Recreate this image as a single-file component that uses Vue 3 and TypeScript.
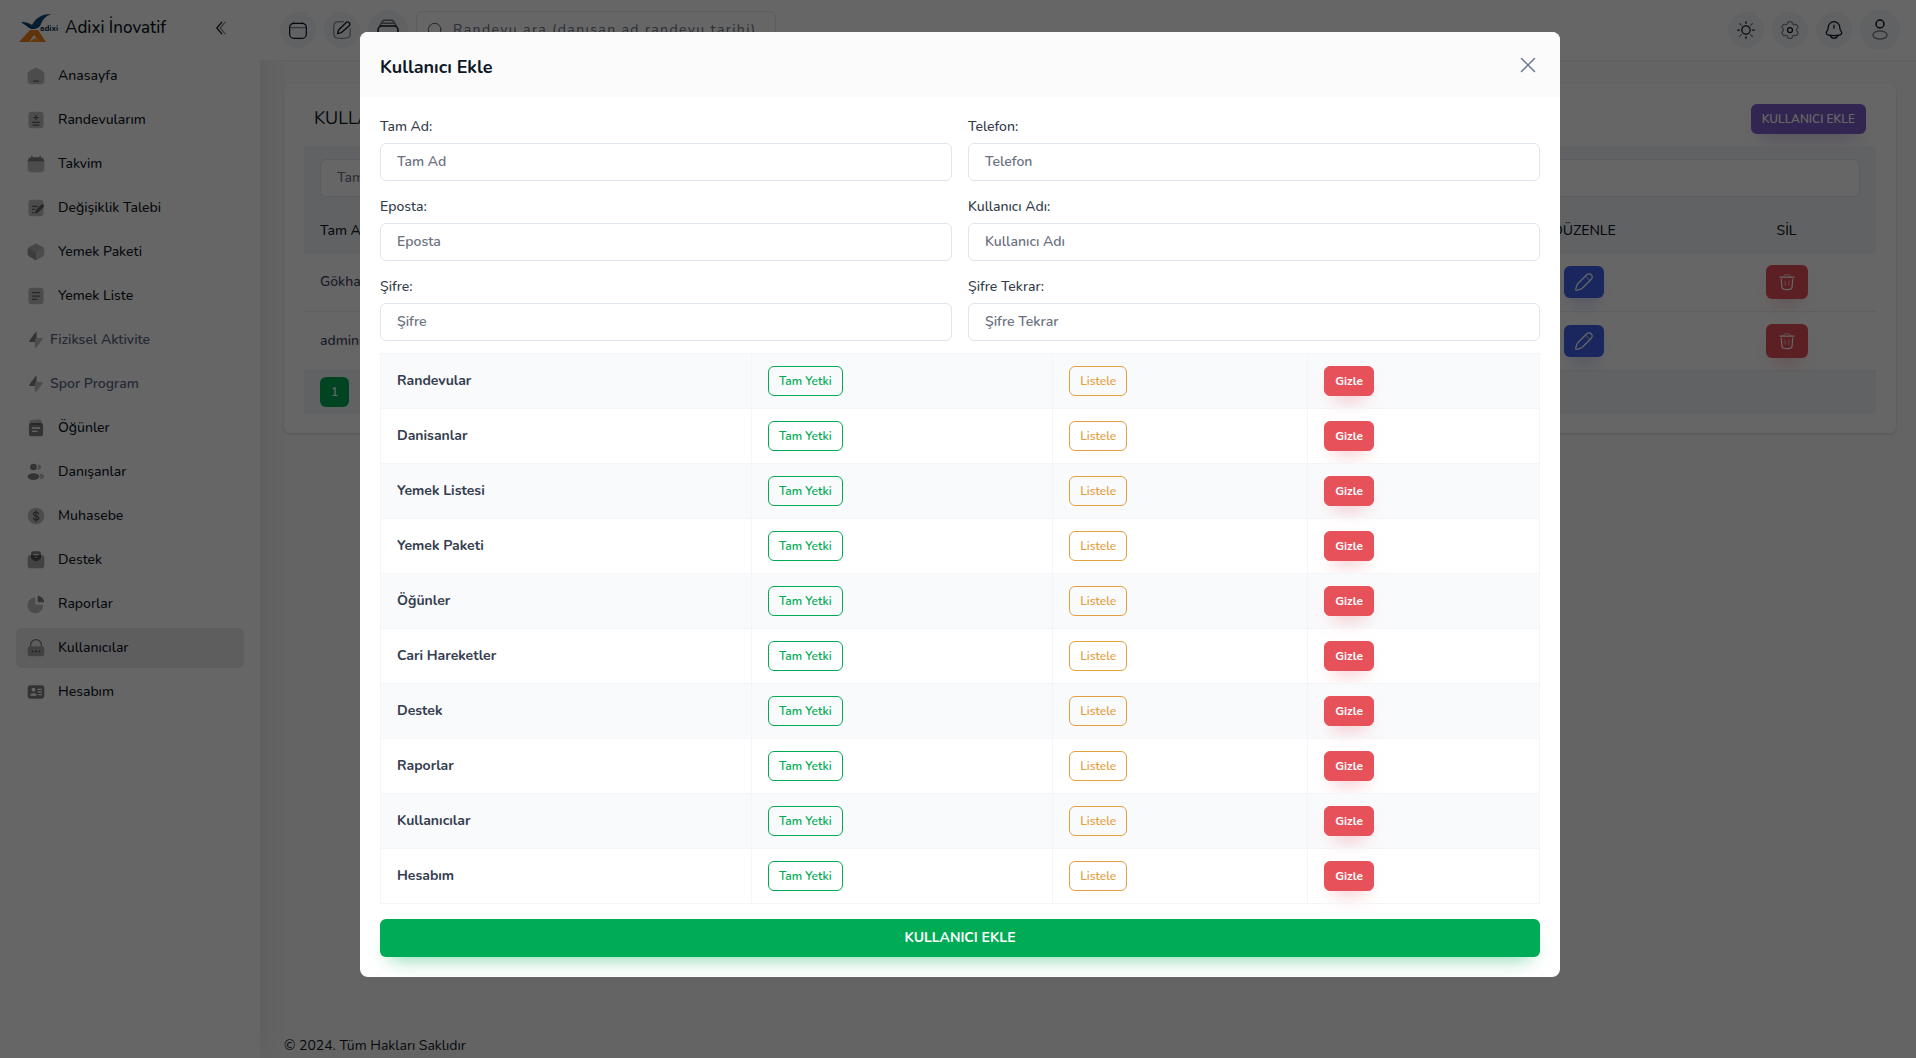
<script setup lang="ts">
import { ref } from 'vue'

interface MenuItem {
  label: string
  icon: string
  muted?: boolean
  active?: boolean
}

interface Field {
  id: string
  label: string
  type: string
}

const menu: MenuItem[] = [
  { label: 'Anasayfa', icon: 'home' },
  { label: 'Randevularım', icon: 'invoice' },
  { label: 'Takvim', icon: 'calendar' },
  { label: 'Değişiklik Talebi', icon: 'edit' },
  { label: 'Yemek Paketi', icon: 'box' },
  { label: 'Yemek Liste', icon: 'list' },
  { label: 'Fiziksel Aktivite', icon: 'bolt', muted: true },
  { label: 'Spor Program', icon: 'bolt', muted: true },
  { label: 'Öğünler', icon: 'notes' },
  { label: 'Danışanlar', icon: 'users' },
  { label: 'Muhasebe', icon: 'dollar' },
  { label: 'Destek', icon: 'mailbox' },
  { label: 'Raporlar', icon: 'chart' },
  { label: 'Kullanıcılar', icon: 'lock', active: true },
  { label: 'Hesabım', icon: 'card' },
]

const fields: Field[] = [
  { id: 'fullname', label: 'Tam Ad', type: 'text' },
  { id: 'phone', label: 'Telefon', type: 'tel' },
  { id: 'email', label: 'Eposta', type: 'email' },
  { id: 'username', label: 'Kullanıcı Adı', type: 'text' },
  { id: 'password', label: 'Şifre', type: 'password' },
  { id: 'password2', label: 'Şifre Tekrar', type: 'password' },
]

const permissions: string[] = [
  'Randevular', 'Danisanlar', 'Yemek Listesi', 'Yemek Paketi', 'Öğünler',
  'Cari Hareketler', 'Destek', 'Raporlar', 'Kullanıcılar', 'Hesabım',
]

const users: string[] = ['Gökhan', 'adminsu']

const form = ref<Record<string, string>>({})
</script>

<template>
  <div class="app">
    <aside class="sidebar">
      <div class="brand">
        <svg class="logo" viewBox="0 0 40 28" aria-hidden="true">
          <path d="M2 8c6 0 8 1 11 3C17 4 22 0 32 0c-7 3-8 6-10 10-1 3-4 5-8 5C10 14 6 11 2 8z" fill="#0f4c75" />
          <path d="M4 7c5 5 8 6 13 6-3 3-6 2-8 0z" fill="#0b3a5b" />
          <path d="M0 28 11 16h8l8 12h-7l-5-7-5 7z" fill="#f08019" />
          <path d="m10 28 6-4 5 4z" fill="#f7941d" />
          <text x="21" y="17" font-size="8" font-weight="800" fill="#143a52">adixi</text>
        </svg>
        <span class="brand-name">Adixi İnovatif</span>
        <button class="collapse" type="button" aria-label="Menüyü daralt">
          <svg viewBox="0 0 24 24" width="20" height="20" fill="none" stroke="currentColor" stroke-width="1.5" stroke-linecap="round" stroke-linejoin="round">
            <path d="m13 19-6-7 6-7" />
            <path d="m17 19-6-7 6-7" opacity=".5" />
          </svg>
        </button>
      </div>
      <nav class="menu">
        <a v-for="item in menu" :key="item.label" href="#" :class="['menu-item', { muted: item.muted, active: item.active }]">
          <svg class="menu-icon" viewBox="0 0 24 24" fill="currentColor" aria-hidden="true">
            <template v-if="item.icon === 'home'">
              <path opacity=".5" d="M2 12.2c0-2.3 0-3.4.5-4.4s1.500-1.500 3.400-2.700l2-1.200C9.900 2.600 10.900 2 12 2s2.100.6 4.100 1.900l2 1.200c1.900 1.200 2.900 1.700 3.400 2.700s.5 2.100.5 4.400v1.500c0 3.900 0 5.900-1.200 7.100S17.800 22 14 22h-4c-3.800 0-5.700 0-6.800-1.200S2 17.600 2 13.700z" />
              <rect x="8.250" y="17.250" width="7.500" height="1.500" rx=".75" />
            </template>
            <template v-else-if="item.icon === 'invoice'">
              <rect opacity=".5" x="3" y="2" width="18" height="20" rx="4" />
              <path d="M11.250 6h1.500v2.250H15v1.500h-2.250V12h-1.500V9.750H9v-1.500h2.250z" />
              <rect x="7" y="14" width="10" height="1.500" rx=".75" />
              <rect x="8" y="17.500" width="8" height="1.500" rx=".75" />
            </template>
            <template v-else-if="item.icon === 'calendar'">
              <path d="M7.750 2.500a.75.75 0 0 0-1.500 0v1.600C3.900 4.400 2.200 5.700 2 9h20c-.2-3.300-1.900-4.600-4.250-4.900V2.500a.75.75 0 0 0-1.500 0V4h-8.500z" />
              <path opacity=".5" d="M2 9h20v5c0 3.800 0 5.700-1.200 6.800S17.800 22 14 22h-4c-3.800 0-5.700 0-6.800-1.200S2 17.800 2 14z" />
            </template>
            <template v-else-if="item.icon === 'edit'">
              <rect opacity=".5" x="3" y="2" width="18" height="20" rx="4" />
              <path d="m18.200 8.200-6.600 6.500-1.300 4.100 4.200-1.300L21 11c2-2-.8-4.700-2.800-2.800z" />
              <path d="M7.250 9.250h7v1.500h-7zM7.250 13h3v1.500h-3zM7.250 16.750h2v1.500h-2z" />
            </template>
            <template v-else-if="item.icon === 'box'">
              <path opacity=".8" d="M12 22V12L2.700 7.200C2 8.200 2 9.500 2 11.500v1c0 3.500.6 4.500 4 6.200l2 1.100C10 20.900 11 22 12 22z" />
              <path opacity=".6" d="m2.700 7.200 9.300 4.800 9.300-4.800c-.7-.9-1.800-1.500-3.300-2.300l-2-1C14 2.800 13 2 12 2s-2 .8-4 1.900l-2 1C4.500 5.700 3.400 6.300 2.700 7.200z" />
              <path opacity=".5" d="m21.300 7.200-9.300 4.800v10c1 0 2-1.100 4-2.200l2-1.100c3.400-1.700 4-2.700 4-6.200v-1c0-2 0-3.300-.7-4.300z" />
            </template>
            <template v-else-if="item.icon === 'list'">
              <rect opacity=".5" x="3" y="2" width="18" height="20" rx="4" />
              <path d="M7.250 7.250h9.500v1.500h-9.500zM7.250 11.250h9.500v1.500h-9.500zM7.250 15.250h6v1.500h-6z" />
            </template>
            <template v-else-if="item.icon === 'bolt'">
              <path d="M10.700 3.700 4.400 12.300c-.9 1.300-.4 2.200 1.100 2.200h5.200V12c0-1.500.6-2.300 2-2.300V3c0-1.200-1.200-.6-2 .7z" />
              <path opacity=".5" d="M10.700 14.500V21c0 1.200 1.600.6 2.400-.5l6.500-8.800c.9-1.200.3-2-1.100-2h-5.800c-1.400 0-2 .8-2 2.300z" />
            </template>
            <template v-else-if="item.icon === 'notes'">
              <path opacity=".5" d="M4 4c1-1.500 8-2.500 13-2 1.500.2 2 1.500 2 3l1 3H4z" />
              <path fill-rule="evenodd" d="M7 6h10c2.500 0 3.500 1.300 3.500 3.500v9c0 2.200-1 3.500-3.500 3.500H7c-2.500 0-3.500-1.300-3.500-3.500v-9C3.500 7.300 4.500 6 7 6zm.2 5.200v1.600h9.600v-1.600zm0 4v1.600h6.600v-1.600z" />
            </template>
            <template v-else-if="item.icon === 'users'">
              <circle cx="9" cy="6" r="4" />
              <ellipse cx="9" cy="17.500" rx="7" ry="4" />
              <path opacity=".5" d="M14.500 3a3.200 3.200 0 1 1-1 6c.9-1.800.9-4.500 1-6zM15.500 14c3.500 0 6.500 1.400 6.500 3.300s-2.700 3.200-6 3.200c1.800-2 1.800-4.500-.5-6.500z" />
            </template>
            <template v-else-if="item.icon === 'dollar'">
              <circle opacity=".5" cx="12" cy="12" r="10" />
              <path d="M15 9.200c-.4-1.200-1.500-1.900-3-1.900-1.800 0-3 .9-3 2.300 0 3.300 6.200 1.500 6.200 4.900 0 1.400-1.300 2.300-3.200 2.300-1.700 0-2.900-.8-3.200-2.200M12 5.500v13" fill="none" stroke="currentColor" stroke-width="1.600" stroke-linecap="round" />
            </template>
            <template v-else-if="item.icon === 'mailbox'">
              <path opacity=".7" d="M2 9c0-2 1.500-3 4-3h12c2.500 0 4 1 4 3v9c0 3-1 4-4 4H6c-3 0-4-1-4-4z" />
              <path fill-rule="evenodd" d="M6 5c0-2 1-3.500 3-3.500h6c2 0 3 1.500 3 3.500v4c0 1.500-4 4.500-6 4.500S6 10.500 6 9zm3 .2v1.500h6V5.200zM10.500 8v1.500h3V8z" />
            </template>
            <template v-else-if="item.icon === 'chart'">
              <path opacity=".5" d="M9.500 4.300C10.600 4 11 4.200 11 5.300V11c0 1.500.5 2 2 2h6c1.600 0 2 .2 1.600 1.600A9.500 9.500 0 1 1 9.500 4.300z" />
              <path d="M14 4c0-1.800.4-2 1.600-1.600a9 9 0 0 1 6 6c.4 1.200.2 1.600-1.600 1.600h-4.500c-1 0-1.500-.5-1.500-1.500z" />
            </template>
            <template v-else-if="item.icon === 'lock'">
              <path d="M5.500 10V8.500a6.500 6.500 0 0 1 13 0V10" fill="none" stroke="currentColor" stroke-width="1.500" />
              <rect opacity=".6" x="2" y="10" width="20" height="12" rx="3" />
              <path d="M7 15h2v2H7zM11 15h2v2h-2zM15 15h2v2h-2z" />
            </template>
            <template v-else>
              <path fill-rule="evenodd" d="M6 4h12c3 0 4 1 4 4v8c0 3-1 4-4 4H6c-3 0-4-1-4-4V8c0-3 1-4 4-4zm3 3a2.200 2.200 0 1 0 0 4.400A2.200 2.200 0 0 0 9 7zm-4 9c0 1 8 1 8 0 0-3.500-8-3.500-8 0zm9-8v1.500h5V8zm0 3.200v1.500h5v-1.500zm1 3.300V16h4v-1.500z" />
            </template>
          </svg>
          <span>{{ item.label }}</span>
        </a>
      </nav>
    </aside>

    <div class="page">
      <header class="topbar">
        <button class="round" type="button" aria-label="Takvim">
          <svg viewBox="0 0 24 24" width="20" height="20" fill="none" stroke="currentColor" stroke-width="1.500" stroke-linecap="round">
            <rect x="2" y="4" width="20" height="18" rx="5" />
            <path opacity=".5" d="M7 4V2.500M17 4V2.500M2 9h20" />
          </svg>
        </button>
        <button class="round" type="button" aria-label="Düzenle">
          <svg viewBox="0 0 24 24" width="20" height="20" fill="none" stroke="currentColor" stroke-width="1.500" stroke-linecap="round">
            <path opacity=".5" d="M22 10.500V12c0 4.700 0 7.100-1.500 8.500S16.700 22 12 22s-7.100 0-8.500-1.500S2 16.700 2 12s0-7.100 1.500-8.500S7.300 2 12 2h1.500" />
            <path d="m16.700 3.300-8.500 8.400c-.9.900-1.500 4.700-1.500 4.700s3.800-.6 4.700-1.500L20.700 7c2.400-2.700-1.300-6.300-4-3.700z" />
          </svg>
        </button>
        <button class="round large" type="button" aria-label="Arşiv">
          <svg viewBox="0 0 24 24" width="24" height="24" fill="none" stroke="currentColor" stroke-width="1.500" stroke-linecap="round">
            <rect x="2" y="8" width="20" height="13" rx="4" />
            <path opacity=".6" d="M4 7.500c.2-1.500 1-2.300 2.500-2.300h11c1.500 0 2.300.8 2.500 2.300M6 4.500c.2-1.500 1-2.300 2.500-2.300h7c1.500 0 2.300.8 2.500 2.300" />
          </svg>
        </button>
        <label class="search">
          <svg viewBox="0 0 24 24" width="16" height="16" fill="none" stroke="currentColor" stroke-width="1.500" stroke-linecap="round" aria-hidden="true">
            <circle cx="11.500" cy="11.500" r="9.500" />
            <path d="m18.500 18.500 3.500 3.500" />
          </svg>
          <input type="text" placeholder="Randevu ara (danışan ad randevu tarihi)" aria-label="Randevu ara" />
        </label>
        <span class="spacer"></span>
        <button class="round" type="button" aria-label="Tema">
          <svg viewBox="0 0 24 24" width="20" height="20" fill="none" stroke="currentColor" stroke-width="1.500" stroke-linecap="round">
            <circle cx="12" cy="12" r="5" />
            <path d="M12 2v2M12 20v2M4 12H2M22 12h-2" />
            <path opacity=".5" d="m19.800 4.300-2.300 2M4.200 4.300l2.300 2M6.500 17.600l-2.300 2.200M19.800 19.800l-2.300-2.200" />
          </svg>
        </button>
        <button class="round" type="button" aria-label="Ayarlar">
          <svg viewBox="0 0 24 24" width="20" height="20" fill="none" stroke="currentColor" stroke-width="1.500">
            <circle cx="12" cy="12" r="3" />
            <path opacity=".5" d="M13.800 2.200c-.4-.2-3.200-.2-3.600 0-.9.400-1 .9-1.100 1.900-.1 1-1.600 1.900-2.600 1.400-.9-.5-1.500-.6-2.200 0-.7.600-1.800 2.500-1.900 3.100-.2 1 .3 1.300 1.100 1.900.9.600.9 2.400 0 3-.8.600-1.300 1-1.100 1.900.1.600 1.200 2.500 1.900 3.100.7.600 1.300.5 2.200 0 1-.5 2.500.4 2.600 1.400.1 1 .2 1.500 1.100 1.900.4.200 3.200.2 3.600 0 .9-.4 1-.9 1.100-1.900.1-1 1.600-1.900 2.600-1.400.9.500 1.500.6 2.200 0 .7-.6 1.800-2.500 1.900-3.100.2-1-.3-1.300-1.100-1.900-.9-.6-.9-2.400 0-3 .8-.6 1.300-1 1.100-1.900-.1-.6-1.200-2.500-1.900-3.100-.7-.6-1.300-.5-2.200 0-1 .5-2.500-.4-2.600-1.400-.1-1-.2-1.500-1.100-1.900z" />
          </svg>
        </button>
        <button class="round" type="button" aria-label="Bildirimler">
          <svg viewBox="0 0 24 24" width="20" height="20" fill="none" stroke="currentColor" stroke-width="1.500" stroke-linecap="round">
            <path d="M19 9.700V9c0-3.900-3.100-7-7-7S5 5.100 5 9v.7c0 .8-.2 1.700-.7 2.400l-1.100 1.700c-1 1.500-.2 3.600 1.500 4.100 4.800 1.300 9.800 1.300 14.600 0 1.700-.5 2.500-2.600 1.500-4.100l-1.100-1.700c-.5-.7-.7-1.600-.7-2.400z" />
            <path d="M7.500 19c.7 1.700 2.400 3 4.500 3s3.800-1.300 4.500-3" />
            <path d="M12 6v4" />
          </svg>
        </button>
        <button class="round large" type="button" aria-label="Profil">
          <svg viewBox="0 0 24 24" width="24" height="24" fill="none" stroke="currentColor" stroke-width="1.500">
            <circle cx="12" cy="6" r="4" />
            <ellipse opacity=".5" cx="12" cy="17" rx="7" ry="4" />
          </svg>
        </button>
      </header>

      <main class="content">
        <section class="card">
          <div class="card-head">
            <h1>KULLANICILAR</h1>
            <button class="btn-add" type="button">KULLANICI EKLE</button>
          </div>
          <table class="users">
            <thead>
              <tr>
                <td colspan="3"><input class="filter" type="text" placeholder="Tam Ad" aria-label="Tam Ad ara" /></td>
              </tr>
              <tr class="heads">
                <th scope="col">Tam Ad</th>
                <th scope="col" class="center edit-col">DÜZENLE</th>
                <th scope="col" class="center del-col">SİL</th>
              </tr>
            </thead>
            <tbody>
              <tr v-for="user in users" :key="user">
                <td>{{ user }}</td>
                <td class="center">
                  <button class="icon-btn edit" type="button" aria-label="Düzenle">
                    <svg viewBox="0 0 24 24" width="20" height="20" fill="none" stroke="currentColor" stroke-width="1.500">
                      <path d="m15.300 3.300-9.600 9.600c-1 1-1.500 1.500-1.900 2.300-.4.800-.6 1.500-1 2.800l-.7 2.300c-.4 1.200.4 2 1.600 1.600l2.300-.7c1.300-.4 2-.6 2.800-1 .8-.4 1.300-.9 2.300-1.900l9.600-9.600c3.600-3.500-1.900-9-5.400-5.400z" />
                      <path opacity=".5" d="M14.400 4.200s.1 2 1.800 3.700 3.700 1.800 3.700 1.800" />
                    </svg>
                  </button>
                </td>
                <td class="center">
                  <button class="icon-btn delete" type="button" aria-label="Sil">
                    <svg viewBox="0 0 24 24" width="20" height="20" fill="none" stroke="currentColor" stroke-width="1.500" stroke-linecap="round">
                      <path d="M20.500 6h-17M18.800 8.500l-.4 6.900c-.2 2.700-.3 4-1.200 4.800-.8.800-2.200.8-4.800.8h-.8c-2.700 0-4 0-4.900-.8-.8-.8-.9-2.100-1.100-4.800l-.4-6.900" />
                      <path opacity=".5" d="m9.500 11 .5 5M14.500 11l-.5 5M6.500 6c1.500 0 2-.6 2.500-1.700C9.400 3.200 10 3 11 3h2c1 0 1.600.2 2 1.300.5 1.100 1 1.700 2.500 1.700" />
                    </svg>
                  </button>
                </td>
              </tr>
            </tbody>
            <tfoot>
              <tr>
                <td colspan="3"><button class="pager" type="button">1</button></td>
              </tr>
            </tfoot>
          </table>
        </section>
      </main>
      <footer class="footer">© 2024. Tüm Hakları Saklıdır</footer>
    </div>

    <div class="overlay">
      <section class="modal" role="dialog" aria-modal="true" aria-labelledby="modal-title">
        <header class="modal-head">
          <h2 id="modal-title">Kullanıcı Ekle</h2>
          <button class="close" type="button" aria-label="Kapat">
            <svg viewBox="0 0 24 24" width="24" height="24" fill="none" stroke="currentColor" stroke-width="1.500" stroke-linecap="round">
              <path d="M18.500 5.500l-13 13M5.500 5.500l13 13" />
            </svg>
          </button>
        </header>
        <form class="modal-body" @submit.prevent>
          <div class="fields">
            <div v-for="field in fields" :key="field.id" class="field">
              <label :for="field.id">{{ field.label }}:</label>
              <input :id="field.id" v-model="form[field.id]" :type="field.type" :placeholder="field.label" />
            </div>
          </div>
          <table class="perms">
            <colgroup>
              <col class="c-name" />
              <col class="c-full" />
              <col class="c-list" />
              <col class="c-hide" />
            </colgroup>
            <tbody>
              <tr v-for="name in permissions" :key="name">
                <th scope="row">{{ name }}</th>
                <td><button class="chip full" type="button">Tam Yetki</button></td>
                <td><button class="chip list" type="button">Listele</button></td>
                <td><button class="chip hide" type="button">Gizle</button></td>
              </tr>
            </tbody>
          </table>
          <button class="submit" type="submit">KULLANICI EKLE</button>
        </form>
      </section>
    </div>
  </div>
</template>

<style>
body {
  background: #fafafa;
}
</style>

<style scoped>
* {
  box-sizing: border-box;
}

.app {
  display: flex;
  min-height: 100vh;
  font-family: Nunito, Lato, "Noto Sans", sans-serif;
  font-size: 14px;
  line-height: 20px;
  color: #0e1726;
}

button,
input {
  font: inherit;
}

button {
  border: 0;
  cursor: pointer;
}

svg {
  display: block;
  flex: none;
}

h1,
h2 {
  margin: 0;
  font-size: 18px;
  line-height: 28px;
}

.sidebar {
  flex: none;
  width: 260px;
  background: #fff;
  box-shadow: 5px 0 25px 0 rgba(94, 92, 154, 0.1);
}

.brand {
  display: flex;
  align-items: center;
  height: 56px;
  padding: 0 23px 0 19px;
}

.logo {
  width: 40px;
  height: 28px;
}

.brand-name {
  flex: 1;
  padding-left: 6px;
  font-size: 17px;
  line-height: 28px;
  font-weight: 500;
}

.collapse {
  padding: 0;
  background: none;
  color: inherit;
  width: 32px;
  display: flex;
  justify-content: center;
}

.menu {
  display: flex;
  flex-direction: column;
  gap: 4px;
  padding: 0 16px;
}

.menu-item {
  display: flex;
  align-items: center;
  gap: 12px;
  height: 40px;
  padding: 0 10px;
  border-radius: 6px;
  color: #0e1726;
  font-weight: 500;
  text-decoration: none;
}

.menu-item.muted {
  gap: 4px;
  color: #5e6784;
  font-weight: 600;
}

.menu-item.active {
  background: rgba(0, 0, 0, 0.08);
}

.menu-icon {
  width: 20px;
  height: 20px;
  color: rgba(0, 0, 0, 0.5);
}

.page {
  display: flex;
  flex: 1;
  flex-direction: column;
  min-width: 0;
}

.topbar {
  display: flex;
  align-items: center;
  gap: 8px;
  height: 61px;
  padding: 0 16px 0 20px;
  background: #fff;
  border-bottom: 1px solid #eceff2;
}

.round {
  display: flex;
  align-items: center;
  justify-content: center;
  width: 36px;
  height: 36px;
  padding: 0;
  border-radius: 50%;
  background: rgba(224, 230, 237, 0.4);
  color: #0e1726;
}

.round.large {
  width: 40px;
  height: 40px;
}

.search {
  display: flex;
  align-items: center;
  gap: 10px;
  width: 360px;
  height: 38px;
  padding: 0 10px;
  border: 1px solid #e0e6ed;
  border-radius: 6px;
  color: #506070;
}

.search input {
  flex: 1;
  min-width: 0;
  padding: 0;
  border: 0;
  outline: 0;
  background: none;
  letter-spacing: 0.1em;
}

input::placeholder {
  color: #6b7280;
  opacity: 1;
}

.spacer {
  flex: 1;
}

.content {
  flex: 1;
  padding: 23px 20px 24px 24px;
}

.card {
  padding: 20px;
  background: #fff;
  border-radius: 6px;
  box-shadow: 0 1px 3px rgba(0, 0, 0, 0.15);
}

.card-head {
  display: flex;
  align-items: flex-start;
  justify-content: space-between;
  padding: 0 10px;
  margin-bottom: 13px;
}

.card-head h1 {
  font-weight: 400;
}

.btn-add {
  height: 30px;
  padding: 0 11px;
  border-radius: 6px;
  background: #805dca;
  box-shadow: 0 10px 20px -10px rgba(128, 93, 202, 0.6);
  color: #fff;
  font-size: 12px;
  font-weight: 600;
}

.users {
  width: 100%;
  border-collapse: separate;
  border-spacing: 0;
}

.users td,
.users th {
  padding: 12px 16px;
  font-weight: 500;
  text-align: left;
}

.users thead,
.users tfoot {
  background: #f3f6f9;
}

.users .center {
  text-align: center;
}

.users .heads th {
  height: 44px;
}

.users .edit-col {
  width: 226px;
}

.users .del-col {
  width: 179px;
}

.filter {
  display: block;
  width: 100%;
  height: 38px;
  padding: 0 16px 2px;
  border: 1px solid #e0e6ed;
  border-radius: 6px;
  background: #fff;
}

.users tbody td {
  height: 59px;
  padding: 0 16px;
  border-bottom: 1px solid #ebedf2;
  color: #3b3f5c;
}

.users tfoot td {
  padding: 6px 16px;
}

.icon-btn {
  display: inline-flex;
  align-items: center;
  justify-content: center;
  width: 40px;
  height: 32px;
  padding: 0;
  border-radius: 6px;
  color: #fff;
  vertical-align: middle;
}

.icon-btn.edit {
  background: #4361ee;
  box-shadow: 0 10px 20px -10px rgba(67, 97, 238, 0.6);
}

.icon-btn.delete {
  width: 42px;
  height: 34px;
  background: #e7515a;
  box-shadow: 0 10px 20px -10px rgba(231, 81, 90, 0.6);
}

.pager {
  display: block;
  width: 29px;
  height: 30px;
  padding: 0;
  border-radius: 6px;
  background: #00ab55;
  color: #fff;
  font-size: 12px;
  font-weight: 600;
}

.footer {
  padding: 0 24px 2px;
}

.overlay {
  position: fixed;
  inset: 0;
  display: flex;
  align-items: flex-start;
  justify-content: center;
  padding: 32px 0 32px 4px;
  overflow-y: auto;
  background: rgba(0, 0, 0, 0.6);
}

.modal {
  width: 100%;
  max-width: 1200px;
  overflow: hidden;
  background: #fff;
  border-radius: 8px;
}

.modal-head {
  display: flex;
  align-items: center;
  justify-content: space-between;
  height: 65px;
  padding: 0 20px;
  background: #fbfbfb;
}

.modal-head h2 {
  padding-top: 4px;
  font-weight: 700;
}

.close {
  padding: 0;
  background: none;
  color: #6b7690;
}

.modal-body {
  padding: 20px;
}

.fields {
  display: grid;
  grid-template-columns: 1fr 1fr;
  gap: 16px;
}

.field {
  display: flex;
  flex-direction: column;
  gap: 6px;
}

.field label {
  color: #333a48;
  font-weight: 500;
}

.field input {
  height: 38px;
  padding: 0 16px 2px;
  border: 1px solid #e0e6ed;
  border-radius: 6px;
  background: #fff;
  color: #0e1726;
  font-weight: 600;
}

.perms {
  width: 100%;
  margin: 12px 0 15px;
  table-layout: fixed;
  border-collapse: collapse;
  color: #343d4e;
}

.c-name {
  width: 32%;
}

.c-full {
  width: 26%;
}

.c-list {
  width: 22%;
}

.c-hide {
  width: 20%;
}

.perms th,
.perms td {
  height: 55px;
  padding: 0 16px;
  border: 1px solid #f3f5f8;
  text-align: left;
}

.perms th {
  font-weight: 700;
}

.perms tr:nth-child(odd) {
  background: #f9fafc;
}

.chip {
  display: block;
  height: 30px;
  padding: 0 10px;
  border: 1px solid currentColor;
  border-radius: 6px;
  background: none;
  font-size: 12px;
  font-weight: 600;
}

.chip.full {
  color: #00ab55;
}

.chip.list {
  color: #e2a03f;
}

.chip.hide {
  border-color: #e7515a;
  background: #e7515a;
  box-shadow: 0 10px 20px -10px rgba(231, 81, 90, 0.6);
  color: #fff;
  font-weight: 700;
}

.submit {
  display: block;
  width: 100%;
  height: 38px;
  border-radius: 6px;
  background: #00ab55;
  box-shadow: 0 10px 20px -10px rgba(0, 171, 85, 0.6);
  color: #fff;
  font-weight: 700;
}
</style>
